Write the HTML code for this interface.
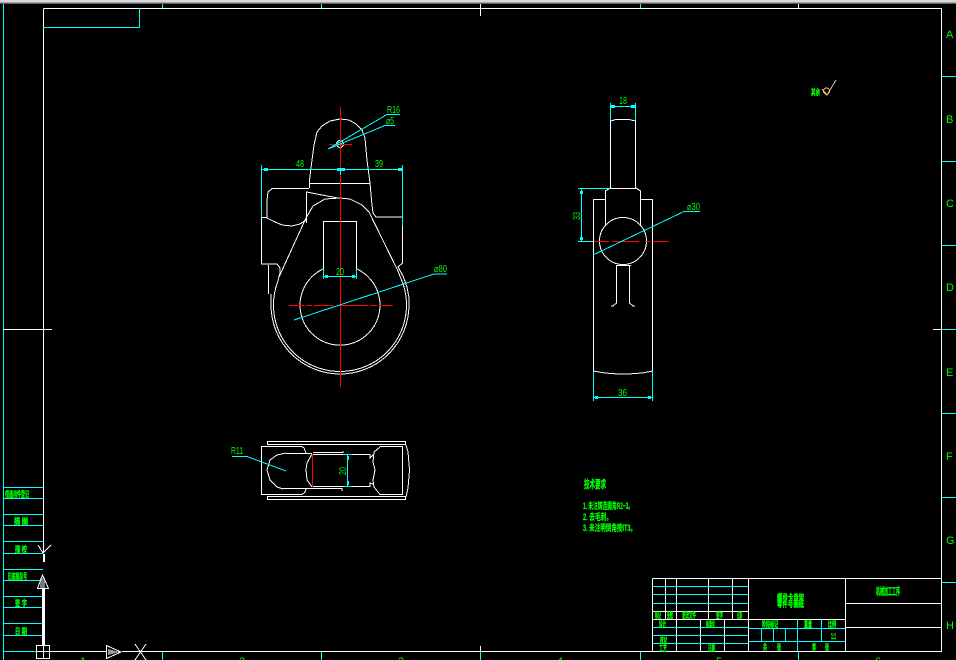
<!DOCTYPE html>
<html><head><meta charset="utf-8"><style>
html,body{margin:0;padding:0;background:#000;width:956px;height:660px;overflow:hidden}
svg{display:block;position:absolute;left:0;top:0}
.w{fill:none;stroke:#fff;stroke-width:1}
.c{fill:none;stroke:#0ff;stroke-width:1}
.r{fill:none;stroke:#f00;stroke-width:1}
text{fill:#0f0;font-family:"Liberation Sans","Noto Sans CJK SC",sans-serif}
.d{font-size:10px;font-family:"Liberation Sans",sans-serif}
.z{font-size:8px;font-weight:700;stroke:#0f0;stroke-width:.35}
.t{font-size:9px;font-weight:700;stroke:#0f0;stroke-width:.25}
.l{font-size:11px}
</style></head><body>
<svg width="956" height="660" viewBox="0 0 956 660" shape-rendering="crispEdges">
<rect x="0" y="0" width="956" height="2" fill="#d8d8d8"/><rect x="0" y="2" width="956" height="1" fill="#a8a8a8"/><rect x="0" y="3" width="956" height="1" fill="#606060"/>
<path class="c" d="M3.5 4V660"/>
<path class="w" d="M43.500 8.500H941.500V651.500H122M106 651.500H50"/>
<path class="w" d="M43.500 8.500V553"/>
<path class="c" d="M43 27.500H139.500V8"/>
<path class="c" d="M162.500 4V8M321.500 4V8M640.500 4V8M162.500 652V660M321.500 652V660M640.500 652V660M480.500 652V660M798.500 652V660M3 651.500H36"/>
<path class="w" d="M480.500 4V16M798.500 4V8M480.500 646V652"/>
<path class="w" d="M3 329.500H52M933 329.500H941"/>
<path class="c" d="M942 76.500H956M942 161.500H956M942 245.500H956M942 329.500H956M942 413.500H956M942 497.500H956M942 582.500H956"/>
<path class="c" d="M3 487.500H43M3 498.500H43M3 514.500H43M3 525.500H43M3 541.500H43M3 553.500H43M3 569.500H43M3 580.500H43M3 596.500H43M3 607.500H43M3 623.500H43M3 635.500H43"/>
<!-- UCS -->
<rect x="42" y="589" width="3" height="56" fill="#fff"/>
<rect x="43" y="554" width="2" height="8" fill="#fff"/>
<rect x="40" y="578" width="5" height="10" fill="#777"/>
<path class="w" d="M38 545L43 553L51 545"/>
<path class="w" d="M42.500 575L37.500 588.500H48.500Z"/>
<rect x="36.500" y="645.500" width="13" height="13" fill="#000" stroke="#fff"/>
<path class="w" d="M43.500 645V659M36 651.500H50"/>
<path fill="#999" d="M108 649L120 652L108 655Z"/>
<path class="w" d="M106.500 645.500V658.500L121 652Z"/>
<path class="w" d="M135 644L146 660M146 644L135 660"/>
<!-- title block -->
<path class="w" d="M652.500 578.500H941M652.500 578.500V651M665.500 578V619M676.500 578V651M708.500 578V619M732.500 578V619M748.500 578V651M845.500 578V651M652 611.500H748M652 619.500H845M700.500 619V651M724.500 619V651M845 603.500H941M845 627.500H941"/>
<path class="c" d="M653 586.500H748M653 594.500H748M653 603.500H748M653 627.500H748M653 635.500H748M653 643.500H748M749 628.500H845M749 641.500H845M797.500 619V651M821.500 619V641M761.500 628V641M773.500 628V641M785.500 628V641"/>
</svg>
<svg width="956" height="660" viewBox="0 0 956 660" shape-rendering="crispEdges">
<!-- main view -->
<g class="w">
<path d="M309.500 188V180L312 160L314 145L317 132L322 126L330 121L340 119L349 120L356 124L362 130L365 138L367 160L370 183L372 205L373 213L376 217H402.500V263L398 267L403 276L407 287L409 298L409 305A69 69 0 1 1 271 305L271 294"/>
<path d="M309 183.500H370"/>
<path d="M309 188.500H272L268 192L267 200V218L273 221L282 225L292 226L300 224L306 220"/>
<path d="M262 217.500H267"/>
<path d="M306.500 223V192L322 195L338 198"/>
<path d="M261.500 217V264H277L280 268V273L277.600 282A66.500 66.500 0 1 0 403.400 285L398 271L369 212L362 205L350 199L340 198L325 199L313 206L306 218L279 277"/>
<path d="M268.500 265V294"/>
<path d="M323.500 269V221.500H356.500V269"/>
<path d="M323 269A40 40 0 1 0 357 269"/>
<circle cx="340" cy="144" r="3.500"/>
<!-- side view -->
<path d="M610.500 120V188M635.500 120V188M610.500 121L616 119.500H629L635.500 121M610 188.500H636"/>
<path d="M610 188L605.500 191V225M636 188L640.500 191V225"/>
<path d="M605 199.500H593.500V371M641 199.500H652.500V371"/>
<circle cx="623" cy="241" r="23.500"/>
<path d="M616.500 266V303L613 306H611M629.500 266V303L633 306H635M616 265.500H631"/>
<path d="M593 371L605 373L618 374H628L642 373L653 371"/>
<!-- top view -->
<path d="M267.500 441V444M267.500 496V500M267 441.500H406M267 444.500H406M267 496.500H406M267 499.500H406M405.500 441V445M405.500 496V500"/>
<path d="M406 445L408 452L409.500 470L408 488L406 497"/>
<path d="M306 453L304 448L302 446.500H261.500V494.500H302L305 492L306 489"/>
<path d="M286 453L277 455L270 460L267 470L270 480L277 487L283 489"/>
<path d="M286 453.500H312M283 488.500H342V491M313 452.500H343V451"/>
<path d="M312 454L307 463L306 470L307 480L312 487"/>
<path d="M313 454.500H370V458L373 455M313 486.500H370V483L373 484"/>
<path d="M380 446.500H402.500V494.500H380L374 487L373 480L375 470L373 462L374 452L380 447"/>
</g>
<!-- red centre lines -->
<g class="r">
<path d="M340.500 107V387"/>
<path d="M329 144.500H352"/>
<path d="M289 305.500H304M306 305.500H312M314 305.500H333M337 305.500H368M370 305.500H377M379 305.500H393"/>
<path d="M312.500 454V487"/>
<path d="M594 241.500H609M612 241.500H620M622 241.500H639M645 241.500H650M653 241.500H669"/>
</g>
<!-- dims -->
<g class="c">
<path d="M261.500 165V217M402.500 165V226M262 169.500H402M340.500 168V175"/>
<path d="M400 114.500H387L328 149"/>
<path d="M395 125.500H385L328 149"/>
<path d="M447 274H434L294 320"/>
<path d="M610.500 103V120M635.500 103V120M611 106.500H635"/>
<path d="M578 188.500H610M578 241.500H593M581.500 189V241"/>
<path d="M700 211.500H684L593 255"/>
<path d="M593.500 371V401M652.500 371V401M594 397.500H652"/>
<path d="M232 456.500H247L286 471"/>
<path d="M347.500 454V487"/>
<path d="M343 454.500H352M343 486.500H352"/>
<path d="M324 276.500H356M323.500 269V279M356.500 269V279"/>
</g>
<path fill="#0ff" d="M264 168h4v3h-4zM337 168h8v3h-8zM398 168h4v3h-4zM611 105h4v3h-4zM631 105h4v3h-4zM580 191h3v3h-3zM580 237h3v3h-3zM595 396h3v3h-3zM648 396h3v3h-3zM325 275h3v3h-3zM352 275h3v3h-3zM347 456h2v4h-2zM347 481h2v4h-2z"/>
<path d="M822 89L827 95L836 80" fill="none" stroke="#f5c08a"/>
<circle cx="826.500" cy="91" r="3" fill="none" stroke="#f5c08a"/>
</svg>
<svg width="956" height="660" viewBox="0 0 956 660">
<text class="d" x="296" y="167" textLength="8" lengthAdjust="spacingAndGlyphs">48</text>
<text class="d" x="375" y="167" textLength="8" lengthAdjust="spacingAndGlyphs">39</text>
<text class="d" x="387" y="113" textLength="13" lengthAdjust="spacingAndGlyphs">R16</text>
<text class="d" x="386" y="124" textLength="8" lengthAdjust="spacingAndGlyphs">⌀5</text>
<text class="d" x="336" y="275" textLength="8" lengthAdjust="spacingAndGlyphs">20</text>
<text class="d" x="434" y="272" textLength="13" lengthAdjust="spacingAndGlyphs">⌀80</text>
<text class="d" x="619" y="104" textLength="8" lengthAdjust="spacingAndGlyphs">18</text>
<text class="d" x="618" y="396" textLength="9" lengthAdjust="spacingAndGlyphs">36</text>
<text class="d" x="687" y="210" textLength="13" lengthAdjust="spacingAndGlyphs">⌀30</text>
<text class="d" x="231" y="454" textLength="12" lengthAdjust="spacingAndGlyphs">R11</text>
<text class="d" transform="translate(580 220) rotate(-90)" textLength="8" lengthAdjust="spacingAndGlyphs">33</text>
<text class="d" transform="translate(346 475) rotate(-90)" textLength="8" lengthAdjust="spacingAndGlyphs">20</text>
<text class="l" x="946" y="38">A</text><text class="l" x="946" y="123">B</text><text class="l" x="946" y="207">C</text><text class="l" x="946" y="291">D</text><text class="l" x="946" y="376">E</text><text class="l" x="946" y="460">F</text><text class="l" x="946" y="544">G</text><text class="l" x="946" y="629">H</text>
<text class="l" x="80" y="665">1</text><text class="l" x="239" y="665">2</text><text class="l" x="398" y="665">3</text><text class="l" x="557" y="665">4</text><text class="l" x="716" y="665">5</text><text class="l" x="875" y="665">6</text>
<text class="z" x="811" y="95" font-size="10" textLength="9" lengthAdjust="spacingAndGlyphs">其余</text>
<text class="z" style="font-size:11px" x="584" y="488" textLength="22" lengthAdjust="spacingAndGlyphs">技术要求</text>
<text class="t" x="583" y="509" textLength="50" lengthAdjust="spacingAndGlyphs">1. 未注铸造圆角R2~3。</text>
<text class="t" x="583" y="520" textLength="29" lengthAdjust="spacingAndGlyphs">2. 去毛刺。</text>
<text class="t" x="583" y="531" textLength="53" lengthAdjust="spacingAndGlyphs">3. 未注明倒角按IT3。</text>
<text class="z" x="5" y="497" textLength="24" lengthAdjust="spacingAndGlyphs">借通用件登记</text>
<text class="z" x="14" y="524" textLength="14" lengthAdjust="spacingAndGlyphs">描 图</text>
<text class="z" x="15" y="552" textLength="12" lengthAdjust="spacingAndGlyphs">描 校</text>
<text class="z" x="8" y="579" textLength="19" lengthAdjust="spacingAndGlyphs">旧底图总号</text>
<text class="z" x="15" y="606" textLength="12" lengthAdjust="spacingAndGlyphs">签 字</text>
<text class="z" x="15" y="634" textLength="12" lengthAdjust="spacingAndGlyphs">日 期</text>
<text class="z" x="777" y="600" textLength="27" lengthAdjust="spacingAndGlyphs">螺母卡盘架</text>
<text class="z" x="777" y="607" textLength="27" lengthAdjust="spacingAndGlyphs">零件号图纸</text>
<text class="z" style="font-size:10px" x="876" y="595" textLength="24" lengthAdjust="spacingAndGlyphs">机械加工工序</text>
<text class="z" x="655" y="618" textLength="6" lengthAdjust="spacingAndGlyphs">标记</text>
<text class="z" x="667" y="618" textLength="6" lengthAdjust="spacingAndGlyphs">处数</text>
<text class="z" x="682" y="618" textLength="14" lengthAdjust="spacingAndGlyphs">更改文件</text>
<text class="z" x="716" y="618" textLength="7" lengthAdjust="spacingAndGlyphs">签字</text>
<text class="z" x="737" y="618" textLength="5" lengthAdjust="spacingAndGlyphs">日期</text>
<text class="z" x="659" y="627" textLength="7" lengthAdjust="spacingAndGlyphs">设计</text>
<text class="z" x="706" y="627" textLength="9" lengthAdjust="spacingAndGlyphs">标准化</text>
<text class="z" x="762" y="627" textLength="16" lengthAdjust="spacingAndGlyphs">阶段标记</text>
<text class="z" x="804" y="627" textLength="8" lengthAdjust="spacingAndGlyphs">重量</text>
<text class="z" x="828" y="627" textLength="8" lengthAdjust="spacingAndGlyphs">比例</text>
<text class="z" x="831" y="639" textLength="5" lengthAdjust="spacingAndGlyphs">1:1</text>
<text class="z" x="660" y="643" textLength="7" lengthAdjust="spacingAndGlyphs">校对</text>
<text class="z" x="659" y="651" textLength="8" lengthAdjust="spacingAndGlyphs">工艺</text>
<text class="z" x="708" y="651" textLength="7" lengthAdjust="spacingAndGlyphs">日期</text>
<text class="z" x="763" y="650" textLength="4" lengthAdjust="spacingAndGlyphs">共</text>
<text class="z" x="777" y="650" textLength="4" lengthAdjust="spacingAndGlyphs">张</text>
<text class="z" x="812" y="650" textLength="4" lengthAdjust="spacingAndGlyphs">第</text>
<text class="z" x="825" y="650" textLength="4" lengthAdjust="spacingAndGlyphs">张</text>
</svg>
</body></html>
